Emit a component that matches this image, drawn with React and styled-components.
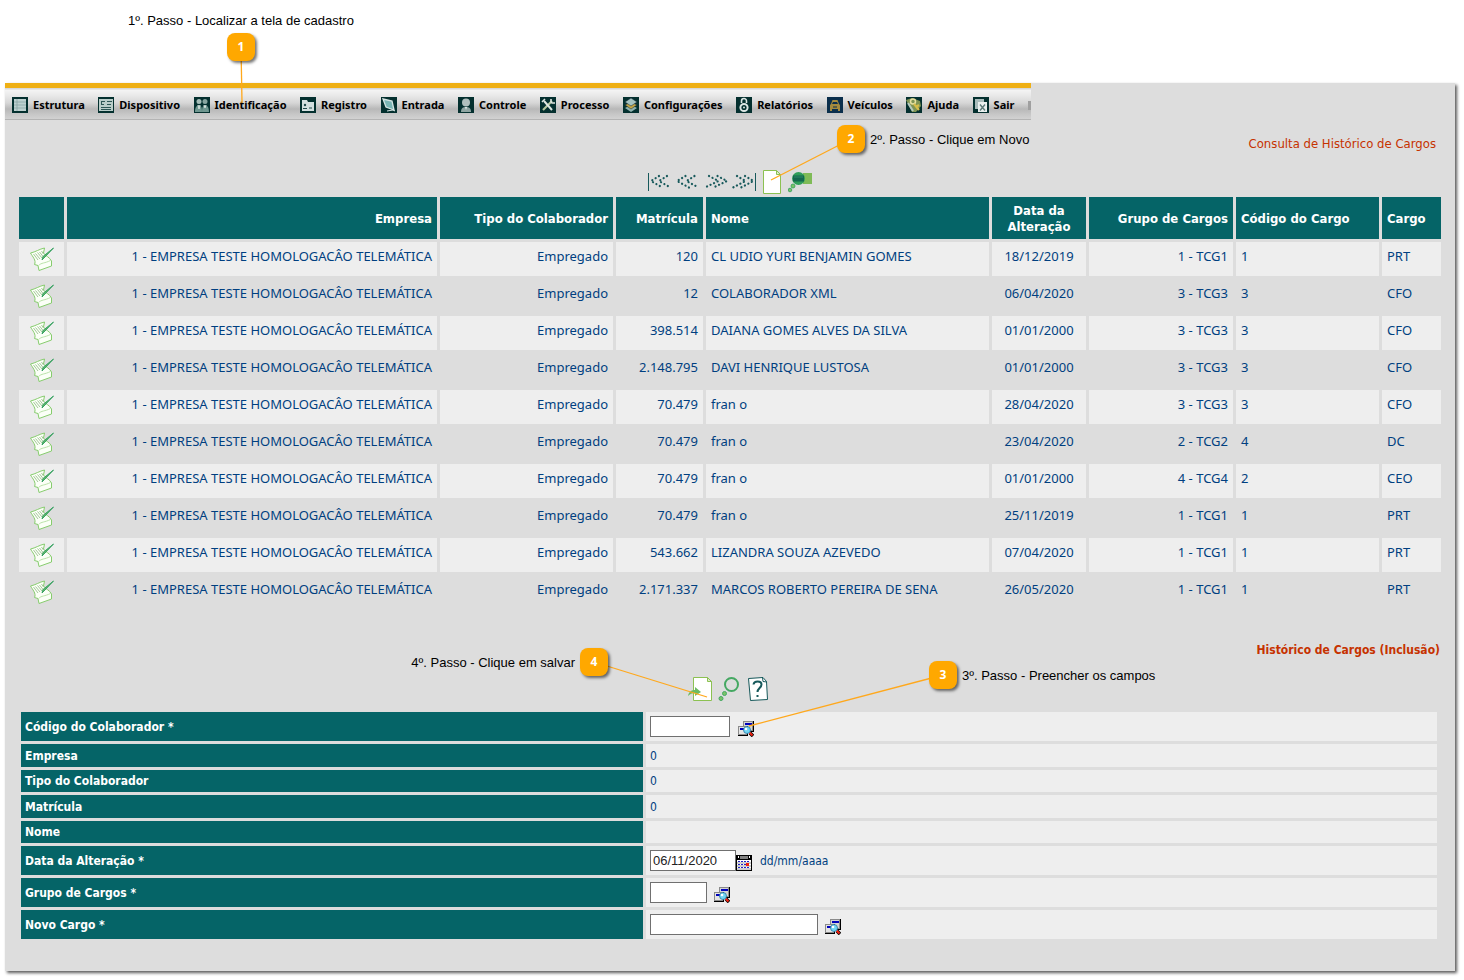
import React from "react";
import styled, { createGlobalStyle } from "styled-components";

const Global = createGlobalStyle`
  * { box-sizing: border-box; }
  body { margin: 0; background: #fff; font-family: "DejaVu Sans Condensed", "Noto Sans", sans-serif; }
  button { border: 0; padding: 0; background: none; cursor: pointer; }
  svg { display: block; }
`;

const Page = styled.main`
  padding: 0 9px 9px 5px;
`;
const Intro = styled.header`
  height: 83px;
`;
const Panel = styled.section`
  background: #ddd;
  box-shadow: 2px 2px 3px rgba(0, 0, 0, 0.65);
  padding-bottom: 32px;
`;
const MenuBar = styled.nav`
  display: flex;
  align-items: center;
  justify-content: space-between;
  width: 1026px;
  max-width: 100%;
  height: 37px;
  padding: 3px 0 0 7px;
  border-top: 5px solid #efb015;
  border-bottom: 1px solid #b4b4b4;
  background: linear-gradient(#d8d8d8 0 1px, #f4f4f4 2px, #e8e8e8 8px, #d6d6d6 15px, #b8b8b8 21px, #c6c6c6 26px, #d2d2d2 31px);
`;
const MenuLink = styled.a`
  display: flex;
  align-items: center;
  gap: 5px;
  color: #000;
  font-family: "Noto Sans", sans-serif;
  font-size: 11px;
  font-weight: bold;
  line-height: 16px;
  text-decoration: none;
`;
const MenuEnd = styled.span`
  width: 3px;
  height: 9px;
  background: #a0a0a0;
`;
const ListTitle = styled.h1`
  margin: 0;
  padding: 16px 19px 0 0;
  color: #c63200;
  font-size: 13px;
  font-weight: normal;
  line-height: 16px;
  text-align: right;
`;
const FormTitle = styled.h2`
  margin: 0;
  padding: 30px 15px 0 0;
  color: #c63200;
  font-size: 12px;
  line-height: 16px;
  text-align: right;
`;
const Toolbar = styled.div`
  position: relative;
  display: flex;
  gap: 4px;
  width: fit-content;
  margin: ${(p) => p.$top}px auto 0;
  padding-right: ${(p) => p.$end || 0}px;
`;
const IconButton = styled.button`
  width: 24px;
  height: 24px;
`;
const ListTable = styled.table`
  width: calc(100% - 22px);
  margin: 0 11px;
  table-layout: fixed;
  border-collapse: separate;
  border-spacing: 3px;
`;
const Column = styled.col`
  width: ${(p) => p.$w}px;
`;
const HeadCell = styled.th`
  height: 42px;
  padding: 2px 5px 0;
  background: #056467;
  color: #fff;
  font-size: 13px;
  line-height: 16px;
  text-align: ${(p) => p.$align};
`;
const BodyRow = styled.tr`
  &:nth-child(odd) > td { background: #eee; }
`;
const Cell = styled.td`
  height: 34px;
  padding: 0 5px 6px;
  color: #003f80;
  font-family: "Noto Sans", sans-serif;
  font-size: 13px;
  line-height: 16px;
  text-align: ${(p) => p.$align};
  white-space: nowrap;
`;
const EditCell = styled.td`
  height: 34px;
  padding: 0;
`;
const EditButton = styled(IconButton)`
  display: block;
  margin: 0 auto;
`;
const Form = styled.form`
  display: flex;
  flex-direction: column;
  gap: 3px;
  margin: 11px 18px 0 16px;
`;
const FormRow = styled.div`
  display: grid;
  grid-template-columns: 622fr 791fr;
  gap: 3px;
  height: ${(p) => p.$h}px;
`;
const Label = styled.label`
  display: flex;
  align-items: center;
  padding-left: 4px;
  background: #056467;
  color: #fff;
  font-size: 12px;
  font-weight: bold;
`;
const Field = styled.div`
  display: flex;
  align-items: center;
  padding-left: 4px;
  background: #eee;
`;
const Value = styled.output`
  color: #003f80;
  font-size: 12px;
`;
const Input = styled.input`
  width: ${(p) => p.$w}px;
  height: 21px;
  padding: 0 2px;
  border: 1px solid #707070;
  background: #fff;
  color: #222;
  font-family: "Liberation Sans", Arial, sans-serif;
  font-size: 13px;
`;
const Lookup = styled.button`
  position: relative;
  align-self: flex-end;
  width: 16px;
  height: 16px;
  margin: 0 0 4px ${(p) => p.$gap}px;
`;
const Hint = styled.span`
  margin-left: 8px;
  color: #003f80;
  font-size: 12px;
`;

/* A numbered step: its line starts at the thing that it points at. */
const Anchor = styled.div`
  position: absolute;
  z-index: 2;
  left: ${(p) => p.$x}px;
  top: ${(p) => p.$y}px;
  width: 0;
  height: 0;
  pointer-events: none;
`;
const Leader = styled.svg`
  position: absolute;
  overflow: visible;
`;
const Badge = styled.span`
  position: absolute;
  left: ${(p) => p.$x - 14}px;
  top: ${(p) => p.$y - 14}px;
  width: 28px;
  height: 28px;
  border-radius: 8px;
  background: #ffa800;
  box-shadow: 2px 2px 3px rgba(0, 0, 0, 0.55);
  color: #fff;
  font: bold 12px/28px "Noto Sans", sans-serif;
  text-align: center;
`;
const Note = styled.span`
  position: absolute;
  top: ${(p) => p.$y - 7}px;
  ${(p) => (p.$side === "left" ? `right: ${19 - p.$x}px;` : "")}
  ${(p) => (p.$side === "right" ? `left: ${p.$x + 19}px;` : "")}
  ${(p) => (p.$side === "above" ? `left: ${p.$x - 113}px; margin-top: -27px;` : "")}
  color: #000;
  font: 13px/16px "Liberation Sans", Arial, sans-serif;
  white-space: nowrap;
`;

function Callout({ n, at, badge, side, children }) {
  const [dx, dy] = badge;
  return (
    <Anchor $x={at[0]} $y={at[1]}>
      <Leader width="1" height="1">
        <line x1="0" y1="0" x2={dx} y2={dy} stroke="#ffa81c" strokeWidth="1.3" />
      </Leader>
      <Badge $x={dx} $y={dy}>{n}</Badge>
      <Note $x={dx} $y={dy} $side={side}>{children}</Note>
    </Anchor>
  );
}

const glyphs = {
  estrutura: (
    <>
      <rect x="2" y="2" width="12" height="12" fill="#bdd0cf" />
      <path d="M2 5h12M2 8h12M2 11h12M5 2v12" stroke="#8ba6a5" strokeWidth=".8" />
    </>
  ),
  dispositivo: (
    <>
      <rect x="1" y="2" width="14" height="12" fill="#b9cdc9" />
      <path d="M3 4.500h4M3.500 4v3M3 7.500h3M9 4.500h5M9 7.500h4M3 10.500h10M3 12.500h10" stroke="#2c5654" fill="none" />
    </>
  ),
  identificacao: (
    <>
      <circle cx="5" cy="4.500" r="2.500" fill="#a5bdb8" /><circle cx="11" cy="4.500" r="2.500" fill="#86a49f" />
      <path d="M1 15c0-5 2-7 4-7s3 2 3 7zM8 15c0-5 1-7 3-7s4 2 4 7z" fill="#6f9790" />
      <path d="M4 8l1 4 1-4M10 8l1 3 1-3" stroke="#d4e0dc" fill="none" />
    </>
  ),
  registro: (
    <>
      <path d="M2 3h5l1 2h6v9H2z" fill="#d3dfdf" />
      <circle cx="5" cy="8" r="1.2" fill="#204a4a" /><path d="M3 11.5h4M9 11h3" stroke="#204a4a" />
    </>
  ),
  entrada: (
    <>
      <path d="M2 2l9 2 2 9-8-3z" fill="#79b5b4" stroke="#d6e5e3" strokeWidth="1.3" />
      <path d="M6 14l6-1 2 1" stroke="#d6e5e3" fill="none" />
    </>
  ),
  controle: (
    <>
      <circle cx="8" cy="5.500" r="4" fill="#b0bfbd" />
      <path d="M3 15c0-4 2-5 5-5s5 1 5 5z" fill="#8fa5a2" /><path d="M7 10l1 3 1-3" fill="#e5eeec" />
    </>
  ),
  processo: (
    <>
      <path d="M3 13l9-9" stroke="#b5c79f" strokeWidth="2.200" />
      <path d="M4 4l8 9" stroke="#dfe7e2" strokeWidth="2" />
      <path d="M2 5l3-3M11 2v3l1 1h3" stroke="#dfe7e2" fill="none" strokeWidth="1.6" />
    </>
  ),
  configuracoes: (
    <>
      <path d="M2 11l6-3 6 3-6 4z" fill="#8fb3b0" />
      <path d="M2 8l6-3 6 3-6 4z" fill="#c2a545" stroke="#123" strokeWidth=".5" />
      <path d="M2 5l6-4 6 4-6 4z" fill="#a6c4c2" stroke="#123" strokeWidth=".5" />
    </>
  ),
  relatorios: (
    <>
      <circle cx="8" cy="10.500" r="3.600" fill="none" stroke="#dbe6e4" strokeWidth="2" />
      <path d="M5.500 6V4a2.500 2.500 0 015 0v2" fill="none" stroke="#dbe6e4" strokeWidth="1.6" />
      <circle cx="8" cy="10.500" r="1" fill="#dbe6e4" />
    </>
  ),
  veiculos: (
    <>
      <path d="M4 7l1.500-4h5L12 7l1 1v4H3V8z" fill="#a58a3d" />
      <path d="M5 7l1-2h4l1 2z" fill="#0b2f4c" />
      <path d="M4 12v2M12 12v2" stroke="#a58a3d" strokeWidth="2" />
      <path d="M6 10h4" stroke="#0b2f4c" />
    </>
  ),
  ajuda: (
    <>
      <path d="M0 3l6-2 8 3 1 5-5 6-4 0z" fill="#7f9454" />
      <circle cx="7" cy="4.500" r="2.500" fill="none" stroke="#e6e0a0" strokeWidth="1.5" />
      <path d="M8 7l5 6M10 10l3-2" stroke="#d5bd49" strokeWidth="2.200" />
      <path d="M2 6l5 8" stroke="#b5c9bf" strokeWidth="2" />
    </>
  ),
  sair: (
    <>
      <rect x="2" y="2" width="9" height="10" fill="#a9bcbb" />
      <rect x="5" y="5" width="9" height="10" fill="#e9efee" />
      <path d="M7 7.500l5 6M12 7.500l-5 6" stroke="#5d7a79" strokeWidth="1.4" />
    </>
  ),
};

const MenuIcon = ({ name }) => (
  <svg width="16" height="16" viewBox="0 0 16 16" fill="none">
    <rect width="16" height="16" fill={name === "veiculos" ? "#0b2f4c" : "#04302f"} />
    {glyphs[name]}
  </svg>
);

const MENU = [
  ["estrutura", "Estrutura"], ["dispositivo", "Dispositivo"], ["identificacao", "Identificação"],
  ["registro", "Registro"], ["entrada", "Entrada"], ["controle", "Controle"],
  ["processo", "Processo"], ["configuracoes", "Configurações"], ["relatorios", "Relatórios"],
  ["veiculos", "Veículos"], ["ajuda", "Ajuda"], ["sair", "Sair"],
];

const Dots = ({ chevrons, bar }) => (
  <svg width="24" height="24" viewBox="0 0 24 24" fill="none" stroke="#17595b">
    {chevrons.map((c) => (
      <polyline key={c} points={c} strokeWidth="2.200" strokeLinecap="round" strokeDasharray="0.1 3.800" />
    ))}
    {bar !== undefined && <path d={`M${bar} 3v18`} strokeWidth="1" />}
  </svg>
);

const PAGER = [
  ["Primeira página", ["11,6 3,11 14.500,17.500", "19,6 11,11 22.500,17.500"], 0.5],
  ["Página anterior", ["9.5,6 1,11 13,17.5", "18.500,6 10.500,11 22.5,17.5"]],
  ["Próxima página", ["5,6 14.500,11 1,17.5", "13.500,6 23,11 9.500,17.5"]],
  ["Última página", ["5,6 13.500,11 1,17.5", "13,6 21.500,11 9,17.5"], 23.5],
];

const NewIcon = () => (
  <svg width="24" height="24" viewBox="0 0 24 24">
    <path d="M3.5.5h13l4 4v19h-17z" fill="#fff" stroke="#8cc152" />
    <path d="M16.500.5v4h4z" fill="#dcedc8" stroke="#8cc152" />
  </svg>
);
const SearchListIcon = () => (
  <svg width="24" height="24" viewBox="0 0 24 24">
    <rect x="15" y="3" width="9" height="11" fill="#7fbb57" />
    <circle cx="10.500" cy="8.500" r="6.500" fill="#2f9e5b" />
    <path d="M5 5.500h11v6H5z" fill="#14684f" />
    <path d="M6 7h9" stroke="#2f8a6b" />
    <circle cx="5" cy="16" r="2" fill="#7cc367" stroke="#2f9e5b" strokeWidth=".8" />
    <circle cx="2" cy="20" r="1.800" fill="#7cc367" stroke="#2f9e5b" strokeWidth=".8" />
  </svg>
);
const SaveIcon = () => (
  <svg width="24" height="24" viewBox="0 0 24 24">
    <path d="M5.500.5h14l4 4v19h-18z" fill="#fff" stroke="#8cc152" />
    <path d="M19.500.5v4h4z" fill="#dcedc8" stroke="#8cc152" />
    <path d="M0 19c1-5 4-6 7-6v-3l6 5-6 4v-3c-3 0-5 1-7 3z" fill="#6dbb63" />
  </svg>
);
const SearchIcon = () => (
  <svg width="24" height="24" viewBox="0 0 24 24" fill="none">
    <circle cx="15.500" cy="7.500" r="6.500" stroke="#45a862" strokeWidth="2" />
    <circle cx="8.500" cy="16.500" r="2" fill="#7cc367" stroke="#45a862" />
    <circle cx="5" cy="21.500" r="2" fill="#7cc367" stroke="#45a862" />
  </svg>
);
const HelpIcon = () => (
  <svg width="24" height="24" viewBox="0 0 24 24" fill="none">
    <path d="M4.500 1.500L19 .5l3.500 4 1 18-17 1z" fill="#fff" stroke="#17595b" />
    <path d="M18.500.5l.5 4 4 .5" stroke="#17595b" />
    <path d="M9.500 7.500c.5-4 8-4 8 0 0 3.500-4 3.500-4 7.500M13.500 18v2" stroke="#17595b" strokeWidth="2" />
  </svg>
);
const EditIcon = () => (
  <svg width="24" height="24" viewBox="0 0 24 24" fill="none">
    <path d="M0.500 6c5-1 9-4 14-5l-1 5c2 3 6 4 8 8v5l-12.500 4.500-1-5-3.500-1c2-4-2-8-4-11.500z" fill="#fbfff7" stroke="#86cc6d" />
    <path d="M8.500 18.500c3-3 6-2 12-5" stroke="#b9e2a8" />
    <path d="M3.500 7l4.500 6M5.500 6.500l4.500 5.500M7.500 5.500l4.500 5.500M9.500 5l4 5M11.500 4l2 3" stroke="#a4c79a" />
    <path d="M23.500 1l-8.500 9-3 3 1-3.500z" fill="#63b56c" stroke="#2f9e5b" strokeWidth=".9" />
  </svg>
);
const LookupIcon = () => (
  <svg width="16" height="16" viewBox="0 0 16 16">
    <rect x="5" y="0" width="11" height="11" fill="#000" />
    <rect x="5" y="0" width="10" height="10" fill="#8a8a8a" />
    <rect x="6" y="1" width="8" height="8" fill="#d4d4d4" />
    <rect x="7" y="2" width="7" height="2" fill="#00b" />
    <rect x="0" y="5" width="10" height="10" fill="#000" />
    <rect x="0" y="5" width="9" height="9" fill="#8a8a8a" />
    <rect x="1" y="6" width="8" height="7" fill="#e4e4e4" />
    <rect x="2" y="7" width="4" height="2" fill="#00b" />
    <path d="M12 12l3 3" stroke="#000" strokeWidth="3.500" />
    <path d="M11.500 11.500l3 3" stroke="#f02010" strokeWidth="2.200" />
    <circle cx="9" cy="9" r="3.500" fill="#6fd5f5" stroke="#29739e" strokeWidth=".8" />
    <circle cx="8" cy="8" r="1.300" fill="#fff" />
  </svg>
);
const CalendarIcon = () => (
  <svg width="16" height="16" viewBox="0 0 16 16">
    <rect width="16" height="16" fill="#000" />
    <rect x="4" y="1" width="8" height="3" fill="#808080" />
    <path d="M2 1h1v2H2zM13 1h1v2h-1z" fill="#fff" />
    <rect x="1" y="5" width="14" height="10" fill="#fff" />
    <path d="M2 6.500h12M2 9.500h12M2 12.500h12" stroke="#2222c8" strokeDasharray="2 1" />
    <path d="M1 8h14M1 11h14M1 14h14" stroke="#777" strokeWidth=".7" />
    <rect x="10" y="8" width="3" height="3" fill="#f02010" />
  </svg>
);

const COLUMNS = [
  ["", 45, "center"], ["Empresa", 370, "right"], ["Tipo do Colaborador", 173, "right"],
  ["Matrícula", 87, "right"], ["Nome", 283, "left"], ["Data da Alteração", 94, "center"],
  ["Grupo de Cargos", 144, "right"], ["Código do Cargo", 143, "left"], ["Cargo", 59, "left"],
];
const COMPANY = "1 - EMPRESA TESTE HOMOLOGACÂO TELEMÁTICA";
const ROWS = [
  ["120", "CL UDIO YURI BENJAMIN GOMES", "18/12/2019", "1 - TCG1", "1", "PRT"],
  ["12", "COLABORADOR XML", "06/04/2020", "3 - TCG3", "3", "CFO"],
  ["398.514", "DAIANA GOMES ALVES DA SILVA", "01/01/2000", "3 - TCG3", "3", "CFO"],
  ["2.148.795", "DAVI HENRIQUE LUSTOSA", "01/01/2000", "3 - TCG3", "3", "CFO"],
  ["70.479", "fran o", "28/04/2020", "3 - TCG3", "3", "CFO"],
  ["70.479", "fran o", "23/04/2020", "2 - TCG2", "4", "DC"],
  ["70.479", "fran o", "01/01/2000", "4 - TCG4", "2", "CEO"],
  ["70.479", "fran o", "25/11/2019", "1 - TCG1", "1", "PRT"],
  ["543.662", "LIZANDRA SOUZA AZEVEDO", "07/04/2020", "1 - TCG1", "1", "PRT"],
  ["2.171.337", "MARCOS ROBERTO PEREIRA DE SENA", "26/05/2020", "1 - TCG1", "1", "PRT"],
];

export default function App() {
  return (
    <Page>
      <Global />
      <Intro>
        <Callout n="1" at={[242, 103]} badge={[-1, -56]} side="above">
          1º. Passo - Localizar a tela de cadastro
        </Callout>
      </Intro>
      <Panel>
        <MenuBar aria-label="Menu principal">
          {MENU.map(([icon, label]) => (
            <MenuLink key={icon} href={`#${icon}`}>
              <MenuIcon name={icon} />
              {label}
            </MenuLink>
          ))}
          <MenuEnd />
        </MenuBar>

        <ListTitle>Consulta de Histórico de Cargos</ListTitle>
        <Toolbar $top={18}>
          {PAGER.map(([label, chevrons, bar]) => (
            <IconButton key={label} type="button" aria-label={label}>
              <Dots chevrons={chevrons} bar={bar} />
            </IconButton>
          ))}
          <IconButton type="button" aria-label="Novo"><NewIcon /></IconButton>
          <IconButton type="button" aria-label="Pesquisar"><SearchListIcon /></IconButton>
          <Callout n="2" at={[123, 10]} badge={[80, -41]} side="right">
            2º. Passo - Clique em Novo
          </Callout>
        </Toolbar>

        <ListTable>
          <colgroup>
            {COLUMNS.map(([name, w]) => <Column key={name} $w={w} />)}
          </colgroup>
          <thead>
            <tr>
              {COLUMNS.map(([name, , align]) => (
                <HeadCell key={name} scope="col" $align={align}>{name}</HeadCell>
              ))}
            </tr>
          </thead>
          <tbody>
            {ROWS.map((row, i) => (
              <BodyRow key={i}>
                <EditCell>
                  <EditButton type="button" aria-label="Editar"><EditIcon /></EditButton>
                </EditCell>
                {[COMPANY, "Empregado", ...row].map((text, j) => (
                  <Cell key={j} $align={COLUMNS[j + 1][2]}>{text}</Cell>
                ))}
              </BodyRow>
            ))}
          </tbody>
        </ListTable>

        <FormTitle>Histórico de Cargos (Inclusão)</FormTitle>
        <Toolbar $top={19} $end={4}>
          <IconButton type="button" aria-label="Salvar"><SaveIcon /></IconButton>
          <IconButton type="button" aria-label="Pesquisar"><SearchIcon /></IconButton>
          <IconButton type="button" aria-label="Ajuda"><HelpIcon /></IconButton>
          <Callout n="4" at={[19, 20]} badge={[-113, -35]} side="left">
            4º. Passo - Clique em salvar
          </Callout>
        </Toolbar>

        <Form>
          <FormRow $h={29}>
            <Label htmlFor="colaborador">Código do Colaborador *</Label>
            <Field>
              <Input id="colaborador" $w={80} />
              <Lookup type="button" aria-label="Buscar colaborador" $gap={8}>
                <LookupIcon />
                <Callout n="3" at={[11, 5]} badge={[194, -51]} side="right">
                  3º. Passo - Preencher os campos
                </Callout>
              </Lookup>
            </Field>
          </FormRow>
          <FormRow $h={23}>
            <Label htmlFor="empresa">Empresa</Label>
            <Field><Value id="empresa">0</Value></Field>
          </FormRow>
          <FormRow $h={22}>
            <Label htmlFor="tipo">Tipo do Colaborador</Label>
            <Field><Value id="tipo">0</Value></Field>
          </FormRow>
          <FormRow $h={23}>
            <Label htmlFor="matricula">Matrícula</Label>
            <Field><Value id="matricula">0</Value></Field>
          </FormRow>
          <FormRow $h={22}>
            <Label htmlFor="nome">Nome</Label>
            <Field><Value id="nome" /></Field>
          </FormRow>
          <FormRow $h={29}>
            <Label htmlFor="data">Data da Alteração *</Label>
            <Field>
              <Input id="data" $w={86} defaultValue="06/11/2020" />
              <Lookup type="button" aria-label="Abrir calendário" $gap={0}><CalendarIcon /></Lookup>
              <Hint>dd/mm/aaaa</Hint>
            </Field>
          </FormRow>
          <FormRow $h={29}>
            <Label htmlFor="grupo">Grupo de Cargos *</Label>
            <Field>
              <Input id="grupo" $w={57} />
              <Lookup type="button" aria-label="Buscar grupo de cargos" $gap={7}><LookupIcon /></Lookup>
            </Field>
          </FormRow>
          <FormRow $h={29}>
            <Label htmlFor="cargo">Novo Cargo *</Label>
            <Field>
              <Input id="cargo" $w={168} />
              <Lookup type="button" aria-label="Buscar cargo" $gap={7}><LookupIcon /></Lookup>
            </Field>
          </FormRow>
        </Form>
      </Panel>
    </Page>
  );
}
